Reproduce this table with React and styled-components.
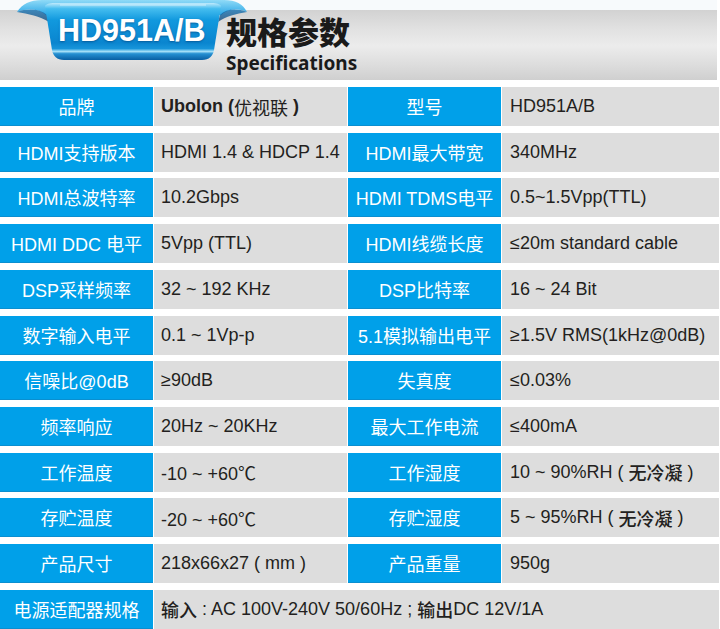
import React from "react";
import styled, { createGlobalStyle } from "styled-components";

const GlobalStyle = createGlobalStyle`
  html, body {
    margin: 0;
    padding: 0;
    background: #ffffff;
  }
  body {
    font-family: "Liberation Sans", Arial, "Noto Sans CJK SC", sans-serif;
  }
`;

const rows = [
  ["品牌", "Ubolon (优视联 )", "型号", "HD951A/B"],
  ["HDMI支持版本", "HDMI 1.4 & HDCP 1.4", "HDMI最大带宽", "340MHz"],
  ["HDMI总波特率", "10.2Gbps", "HDMI TDMS电平", "0.5~1.5Vpp(TTL)"],
  ["HDMI DDC 电平", "5Vpp (TTL)", "HDMI线缆长度", "≤20m standard cable"],
  ["DSP采样频率", "32 ~ 192 KHz", "DSP比特率", "16 ~ 24 Bit"],
  ["数字输入电平", "0.1 ~ 1Vp-p", "5.1模拟输出电平", "≥1.5V RMS(1kHz@0dB)"],
  ["信噪比@0dB", "≥90dB", "失真度", "≤0.03%"],
  ["频率响应", "20Hz ~ 20KHz", "最大工作电流", "≤400mA"],
  ["工作温度", "-10 ~ +60℃", "工作湿度", "10 ~ 90%RH ( 无冷凝 )"],
  ["存贮温度", "-20 ~ +60℃", "存贮湿度", "5 ~ 95%RH ( 无冷凝 )"],
  ["产品尺寸", "218x66x27 ( mm )", "产品重量", "950g"],
];

// chinese runs inside values are set in their own weight
const splitCjk = (text, light) =>
  text.split(/([\u4e00-\u9fff]+)/).map((part, i) =>
    /[\u4e00-\u9fff]/.test(part) ? (
      <Cjk key={i} $light={light}>
        {part}
      </Cjk>
    ) : (
      part
    )
  );

function RibbonArt() {
  return (
    <RibbonSvg width="262" height="64" viewBox="0 0 262 64">
      <defs>
        <linearGradient id="rb" x1="0" y1="0" x2="0" y2="1">
          <stop offset="0" stopColor="#bfeafc" />
          <stop offset="0.1" stopColor="#45bdef" />
          <stop offset="0.3" stopColor="#1199de" />
          <stop offset="0.7" stopColor="#0a85cf" />
          <stop offset="0.8" stopColor="#1895da" />
          <stop offset="0.85" stopColor="#a6e0f8" />
          <stop offset="0.89" stopColor="#2590d2" />
          <stop offset="1" stopColor="#095fa3" />
        </linearGradient>
        <linearGradient id="wing" x1="0" y1="0" x2="0" y2="1">
          <stop offset="0" stopColor="#8fdaf7" />
          <stop offset="1" stopColor="#2aa6e6" />
        </linearGradient>
        <linearGradient id="fold" x1="0" y1="0" x2="0" y2="1">
          <stop offset="0" stopColor="#0b6fb4" />
          <stop offset="1" stopColor="#063f73" />
        </linearGradient>
      </defs>
      <path d="M17 12 C22 4 30 0 42 0 L224 0 C236 0 243 4 247 12 C238 8 228 9 221 15 L46 15 C39 9 28 8 17 12 Z" fill="url(#wing)" />
      <path d="M17 12 C28 8 40 9 47 15 L49 22 C40 16 28 14 17 12 Z" fill="url(#fold)" opacity="0.75" />
      <path d="M247 12 C236 8 226 9 220 15 L218 22 C226 16 236 14 247 12 Z" fill="url(#fold)" opacity="0.75" />
      <path
        d="M45 6 C46 4 50 3 54 3 L212 3 C216 3 220 4 221 6 L214 50 C213 56 209 60 202 60 L64 60 C57 60 53 56 52 50 Z"
        fill="url(#rb)"
      />
      <path d="M60 5 L206 5" stroke="#ffffff" strokeOpacity="0.55" strokeWidth="1.2" />
    </RibbonSvg>
  );
}

export default function App() {
  return (
    <Page>
      <GlobalStyle />
      <Header>
        <Ribbon>
          <RibbonArt />
          <Model>HD951A/B</Model>
        </Ribbon>
        <TitleBlock>
          <TitleCn>规格参数</TitleCn>
          <TitleEn>Specifications</TitleEn>
        </TitleBlock>
      </Header>
      <SpecTable>
        {rows.map((r, i) => (
          <React.Fragment key={i}>
            <Label>{r[0]}</Label>
            <Value $bold={i === 0}>{splitCjk(r[1], i === 0)}</Value>
            <Label>{r[2]}</Label>
            <Value $right>{splitCjk(r[3])}</Value>
          </React.Fragment>
        ))}
        <Label>电源适配器规格</Label>
        <Value $wide>{splitCjk("输入 : AC 100V-240V 50/60Hz ; 输出DC 12V/1A")}</Value>
      </SpecTable>
    </Page>
  );
}

const Page = styled.div`
  width: 720px;
  height: 629px;
  overflow: hidden;
  background: #ffffff;
`;

const Header = styled.header`
  display: flex;
  width: 717px;
  height: 80px;
  background: linear-gradient(
    to bottom,
    #f7fafc 0px,
    #f7fafc 10px,
    #d2d2d2 10px,
    #e2e2e2 30px,
    #ececec 46px,
    #dcdcdc 66px,
    #cfcfcf 80px
  );
`;

const Ribbon = styled.div`
  position: relative;
  width: 222px;
  height: 64px;
  flex: none;
`;

const RibbonSvg = styled.svg`
  position: absolute;
  left: 0;
  top: 0;
`;

const Model = styled.div`
  position: relative;
  padding: 15px 0 0 58px;
  font-family: "Liberation Sans", Arial, sans-serif;
  font-weight: bold;
  font-size: 30.5px;
  line-height: 1;
  color: #ffffff;
  text-shadow: 0 1px 2px rgba(0, 40, 90, 0.45);
`;

const TitleBlock = styled.div`
  display: flex;
  flex-direction: column;
  padding: 15px 0 0 4px;
`;

const TitleCn = styled.div`
  font-family: "Noto Sans CJK SC", sans-serif;
  font-weight: 900;
  font-size: 31px;
  line-height: 32px;
  color: #1a1a1a;
`;

const TitleEn = styled.div`
  margin-top: 6px;
  font-family: "Noto Sans", "Open Sans", sans-serif;
  font-weight: bold;
  font-size: 19px;
  line-height: 20px;
  color: #1a1a1a;
`;

const SpecTable = styled.div`
  display: grid;
  grid-template-columns: 153px 193px 153px 217px;
  grid-auto-rows: 39px;
  column-gap: 1px;
  row-gap: 6.73px;
  width: 718px;
  padding-top: 7px;
`;

const Label = styled.div`
  display: flex;
  align-items: center;
  justify-content: center;
  background: #00a0e9;
  border-bottom: 1px solid #0a8fd0;
  box-sizing: border-box;
  color: #ffffff;
  font-family: "Liberation Sans", Arial, "Noto Sans CJK SC", sans-serif;
  font-size: 18px;
  white-space: nowrap;
`;

const Value = styled.div`
  display: flex;
  align-items: center;
  white-space: pre;
  padding-left: ${(p) => (p.$right ? "8px" : "7px")};
  grid-column: ${(p) => (p.$wide ? "span 3" : "auto")};
  background: #dddddd;
  color: #231f20;
  font-family: "Liberation Sans", Arial, "Noto Sans CJK SC", sans-serif;
  font-size: 18px;
  font-weight: ${(p) => (p.$bold ? "bold" : "normal")};
`;

const Cjk = styled.span`
  font-family: "Noto Sans CJK SC", sans-serif;
  font-weight: ${(p) => (p.$light ? 400 : 500)};
`;
